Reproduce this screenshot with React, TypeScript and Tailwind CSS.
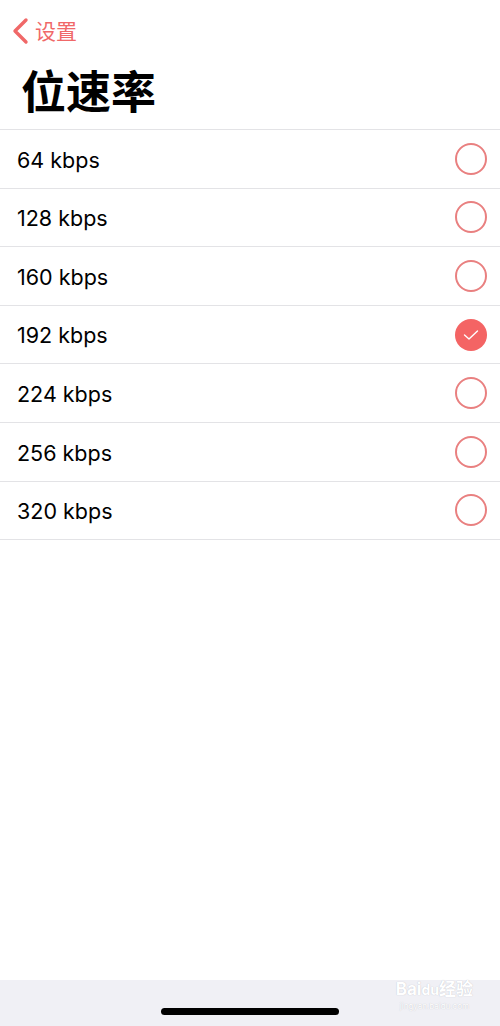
import React from "react";

const rates = ["64 kbps", "128 kbps", "160 kbps", "192 kbps", "224 kbps", "256 kbps", "320 kbps"];
const selected = "192 kbps";

export default function App() {
  return (
    <div
      className="w-[500px] h-[1026px] bg-white flex flex-col relative overflow-hidden"
      style={{ fontFamily: 'Inter, "Noto Sans CJK SC", sans-serif' }}
    >
      <div className="h-[62px] flex items-center pl-[11px] gap-[6px]">
        <svg width="18" height="28" viewBox="0 0 18 28" fill="none">
          <polyline
            points="15,3 4,14 15,25"
            stroke="#f06868"
            strokeWidth="3.4"
            strokeLinecap="round"
            strokeLinejoin="round"
          />
        </svg>
        <span className="text-[21px] text-[#f06868] leading-none mt-[1px]">设置</span>
      </div>
      <div className="h-[67px] flex items-center pl-[21px]">
        <h1 className="text-[45px] font-semibold text-black leading-none -mt-[6px]">位速率</h1>
      </div>
      <div className="border-t border-[#e3e3e6]">
        {rates.map((r) => (
          <div
            key={r}
            className="h-[58.6px] border-b border-[#e3e3e6] flex items-center justify-between pl-[17px] pr-[13px]"
          >
            <span className="text-[21.5px] text-black mt-[2px]">{r}</span>
            {r === selected ? (
              <div className="w-[32px] h-[32px] rounded-full bg-[#f46464] flex items-center justify-center">
                <svg width="16" height="12" viewBox="0 0 16 12" fill="none">
                  <polyline
                    points="1.5,6 6,10 14.5,2"
                    stroke="white"
                    strokeWidth="1.4"
                    strokeLinecap="round"
                    strokeLinejoin="round"
                  />
                </svg>
              </div>
            ) : (
              <div className="w-[32px] h-[32px] rounded-full border-2 border-[#e98080]" />
            )}
          </div>
        ))}
      </div>
      <div className="flex-1" />
      <div className="h-[46px] bg-[#f0f0f5] flex items-start justify-center relative">
        <div className="mt-[28px] w-[178px] h-[7px] rounded-full bg-black" />
        <div className="absolute right-[27px] top-[1px] flex flex-col items-center text-white select-none">
          <span
            className="text-[17px] font-bold leading-none"
            style={{ textShadow: "0 0 1px #b8b8c0" }}
          >
            Bai<span className="text-[14px]">du</span>经验
          </span>
          <span className="text-[8px] leading-none mt-[4px]" style={{ textShadow: "0 0 1px #b8b8c0" }}>
            jingyan.baidu.com
          </span>
        </div>
      </div>
    </div>
  );
}
